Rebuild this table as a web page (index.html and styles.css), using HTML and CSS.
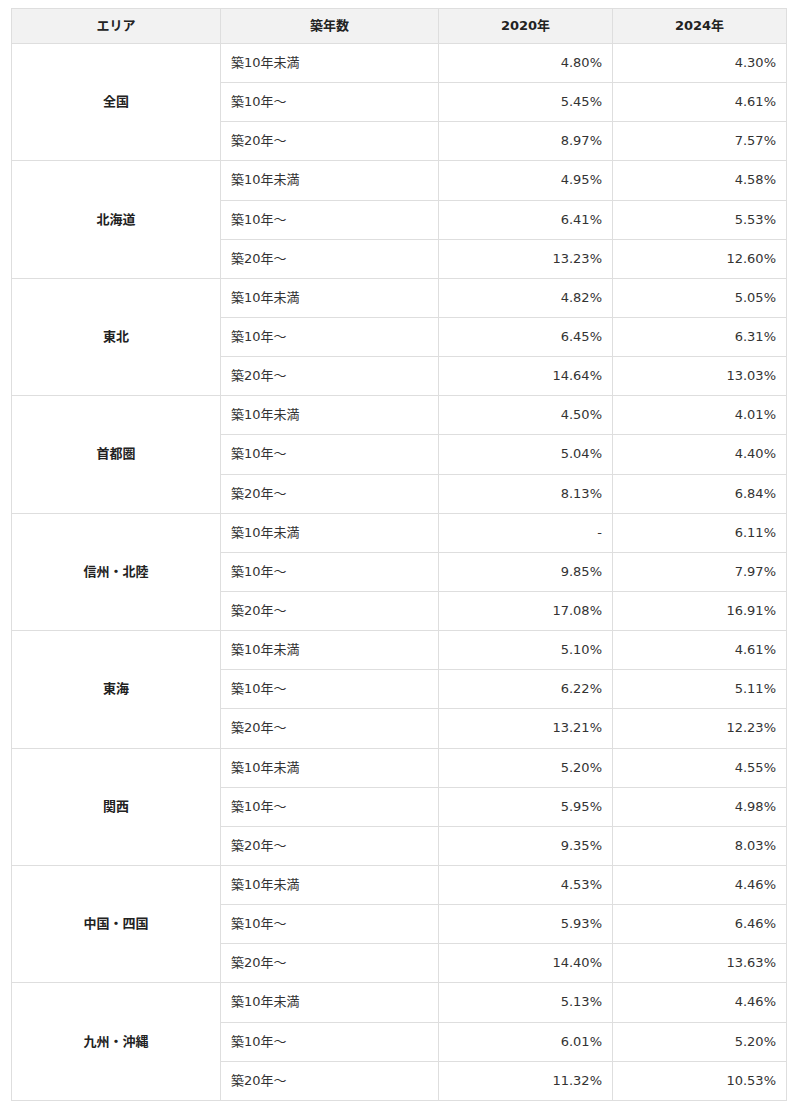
FILE: index.html
```html
<!DOCTYPE html>
<html lang="ja">
<head>
<meta charset="utf-8">
<title>築年数別 空室率</title>
<link rel="stylesheet" href="styles.css">
</head>
<body>
<div class="wrap">
<table class="rate-table">
  <colgroup>
    <col class="c-area"><col class="c-age"><col class="c-num"><col class="c-num">
  </colgroup>
  <thead>
    <tr><th>エリア</th><th>築年数</th><th>2020年</th><th>2024年</th></tr>
  </thead>
  <tbody>
    <tr><td class="area" rowspan="3">全国</td><td class="age">築10年未満</td><td class="num">4.80%</td><td class="num">4.30%</td></tr>
    <tr><td class="age">築10年～</td><td class="num">5.45%</td><td class="num">4.61%</td></tr>
    <tr><td class="age">築20年～</td><td class="num">8.97%</td><td class="num">7.57%</td></tr>

    <tr><td class="area" rowspan="3">北海道</td><td class="age">築10年未満</td><td class="num">4.95%</td><td class="num">4.58%</td></tr>
    <tr><td class="age">築10年～</td><td class="num">6.41%</td><td class="num">5.53%</td></tr>
    <tr><td class="age">築20年～</td><td class="num">13.23%</td><td class="num">12.60%</td></tr>

    <tr><td class="area" rowspan="3">東北</td><td class="age">築10年未満</td><td class="num">4.82%</td><td class="num">5.05%</td></tr>
    <tr><td class="age">築10年～</td><td class="num">6.45%</td><td class="num">6.31%</td></tr>
    <tr><td class="age">築20年～</td><td class="num">14.64%</td><td class="num">13.03%</td></tr>

    <tr><td class="area" rowspan="3">首都圏</td><td class="age">築10年未満</td><td class="num">4.50%</td><td class="num">4.01%</td></tr>
    <tr><td class="age">築10年～</td><td class="num">5.04%</td><td class="num">4.40%</td></tr>
    <tr><td class="age">築20年～</td><td class="num">8.13%</td><td class="num">6.84%</td></tr>

    <tr><td class="area" rowspan="3">信州・北陸</td><td class="age">築10年未満</td><td class="num">-</td><td class="num">6.11%</td></tr>
    <tr><td class="age">築10年～</td><td class="num">9.85%</td><td class="num">7.97%</td></tr>
    <tr><td class="age">築20年～</td><td class="num">17.08%</td><td class="num">16.91%</td></tr>

    <tr><td class="area" rowspan="3">東海</td><td class="age">築10年未満</td><td class="num">5.10%</td><td class="num">4.61%</td></tr>
    <tr><td class="age">築10年～</td><td class="num">6.22%</td><td class="num">5.11%</td></tr>
    <tr><td class="age">築20年～</td><td class="num">13.21%</td><td class="num">12.23%</td></tr>

    <tr><td class="area" rowspan="3">関西</td><td class="age">築10年未満</td><td class="num">5.20%</td><td class="num">4.55%</td></tr>
    <tr><td class="age">築10年～</td><td class="num">5.95%</td><td class="num">4.98%</td></tr>
    <tr><td class="age">築20年～</td><td class="num">9.35%</td><td class="num">8.03%</td></tr>

    <tr><td class="area" rowspan="3">中国・四国</td><td class="age">築10年未満</td><td class="num">4.53%</td><td class="num">4.46%</td></tr>
    <tr><td class="age">築10年～</td><td class="num">5.93%</td><td class="num">6.46%</td></tr>
    <tr><td class="age">築20年～</td><td class="num">14.40%</td><td class="num">13.63%</td></tr>

    <tr><td class="area" rowspan="3">九州・沖縄</td><td class="age">築10年未満</td><td class="num">5.13%</td><td class="num">4.46%</td></tr>
    <tr><td class="age">築10年～</td><td class="num">6.01%</td><td class="num">5.20%</td></tr>
    <tr><td class="age">築20年～</td><td class="num">11.32%</td><td class="num">10.53%</td></tr>
  </tbody>
</table>
</div>
</body>
</html>
```

FILE: styles.css
```css
html, body {
  margin: 0;
  padding: 0;
  background: #ffffff;
}

body {
  font-family: "DejaVu Sans", "Noto Sans CJK JP", sans-serif;
  font-size: 13px;
  color: #333333;
}

.wrap {
  padding: 8px 13px 0 11px;
}

.rate-table {
  width: 776px;
  border-collapse: collapse;
  table-layout: fixed;
}

.c-area { width: 209px; }
.c-age { width: 218px; }
.c-num { width: 174px; }

.rate-table th,
.rate-table td {
  border: 1px solid #dedede;
  padding: 0 10px;
  line-height: 18px;
}

.rate-table thead tr {
  height: 35px;
}

.rate-table th {
  background: #f2f2f2;
  font-weight: bold;
  text-align: center;
  color: #222222;
}

.rate-table tbody tr {
  height: 39.15px;
}

.rate-table .area {
  font-weight: bold;
  text-align: center;
  color: #222222;
}

.rate-table .age {
  text-align: left;
}

.rate-table .num {
  text-align: right;
}
```
